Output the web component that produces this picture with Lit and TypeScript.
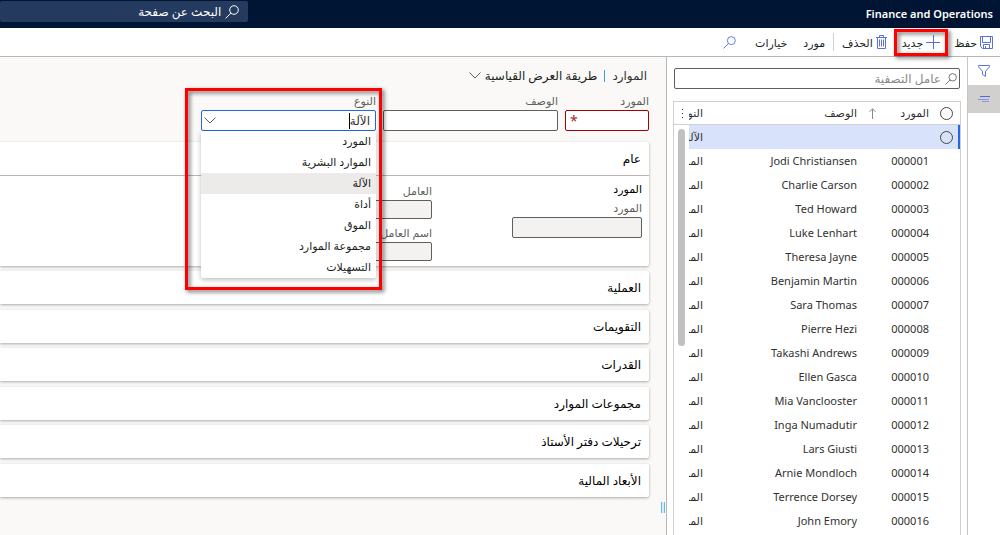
import { LitElement, html, css, svg } from "lit";
import { customElement, state } from "lit/decorators.js";
import { classMap } from "lit/directives/class-map.js";

interface Resource {
  id: string;
  name: string;
}

const NAMES = [
  "Jodi Christiansen",
  "Charlie Carson",
  "Ted Howard",
  "Luke Lenhart",
  "Theresa Jayne",
  "Benjamin Martin",
  "Sara Thomas",
  "Pierre Hezi",
  "Takashi Andrews",
  "Ellen Gasca",
  "Mia Vanclooster",
  "Inga Numadutir",
  "Lars Giusti",
  "Arnie Mondloch",
  "Terrence Dorsey",
  "John Emory",
];

const RESOURCES: Resource[] = NAMES.map((name, i) => ({
  id: String(i + 1).padStart(6, "0"),
  name,
}));

const TYPES = ["المورد", "الموارد البشرية", "الآلة", "أداة", "الموق", "مجموعة الموارد", "التسهيلات"];

const SECTIONS = [
  "العملية",
  "التقويمات",
  "القدرات",
  "مجموعات الموارد",
  "ترحيلات دفتر الأستاذ",
  "الأبعاد المالية",
];

const searchIcon = (size: number) => html`<svg class="icon" width=${size} height=${size} viewBox="0 0 14 14" aria-hidden="true">
  ${svg`<circle cx="9" cy="5" r="4.3" fill="none" stroke="currentColor"/><path d="M5.9 8.1 0.6 13.4" fill="none" stroke="currentColor"/>`}
</svg>`;

const chevronIcon = html`<svg class="icon" width="12" height="7" viewBox="0 0 12 7" aria-hidden="true">
  <path d="M0.5 0.5 6 6 11.5 0.5" fill="none" stroke="currentColor" />
</svg>`;

const saveIcon = html`<svg class="icon blue" width="13" height="13" viewBox="0 0 13 13" aria-hidden="true">
  <path d="M0.5 0.5H12.5V12.5H2.5L0.5 10.5ZM2.5 0.5V6.5H10.5V0.5M3.5 12.5V8.5H9.5V12.5M5.5 10V12.5" fill="none" stroke="currentColor" />
</svg>`;

const plusIcon = html`<svg class="icon blue" width="14" height="14" viewBox="0 0 14 14" aria-hidden="true">
  <path d="M7.5 0V14M0 7.5H14" fill="none" stroke="currentColor" />
</svg>`;

const trashIcon = html`<svg class="icon blue" width="11" height="14" viewBox="0 0 11 14" aria-hidden="true">
  <path d="M0 2.5H11M3.5 2.5V0.5H7.5V2.5M1.5 2.5V13.5H9.5V2.5M3.5 4.5V11.5M5.5 4.5V11.5M7.5 4.5V11.5" fill="none" stroke="currentColor" />
</svg>`;

const funnelIcon = html`<svg class="icon blue" width="12" height="12" viewBox="0 0 12 12" aria-hidden="true">
  <path d="M0.5 0.5H11.5V1.8L7.5 6.2V11.3L4.5 9.5V6.2L0.5 1.8Z" fill="none" stroke="currentColor" />
</svg>`;

const linesIcon = html`<svg class="icon" width="12" height="8" viewBox="0 0 12 8" aria-hidden="true">
  <path d="M2 1.5H12" stroke="#4a6fdc" />
  <path d="M0 4.5H11M4 6.5H11" stroke="#8d93dc" />
</svg>`;

const sortIcon = html`<svg class="icon" width="7" height="11" viewBox="0 0 7 11" aria-hidden="true">
  <path d="M3.5 11V0.8M0.5 3.8 3.5 0.8 6.5 3.8" fill="none" stroke="#8a8886" />
</svg>`;

@customElement("app-root")
export class AppRoot extends LitElement {
  @state() private selectedType = "الآلة";

  static styles = css`
    :host {
      display: block;
      font: 12px/16px "Noto Sans", "DejaVu Sans", sans-serif;
      color: #323130;
    }
    * {
      box-sizing: border-box;
    }
    button,
    input {
      font: inherit;
      color: inherit;
      margin: 0;
      padding: 0;
      border: 0;
      border-radius: 0;
      background: none;
      min-width: 0;
    }
    .icon {
      display: block;
      flex: none;
    }
    .blue {
      color: #5a70dc;
    }
    .page {
      min-height: 100vh;
      display: flex;
      flex-direction: column;
      overflow: hidden;
      background: #fff;
    }
    .topbar {
      display: flex;
      justify-content: space-between;
      align-items: center;
      height: 28px;
      padding: 0 7px 0 0;
      background: #001433;
      color: #fff;
    }
    .brand {
      margin: 0;
      font-size: 11px;
      font-weight: 600;
    }
    .page-search {
      align-self: flex-start;
      display: flex;
      align-items: center;
      gap: 4px;
      width: 25%;
      height: 21px;
      margin-top: 1px;
      padding: 0 9px;
      border-radius: 2px;
      background: #243a5e;
    }
    .page-search input,
    .filter input {
      flex: 1;
    }
    .page-search input::placeholder {
      color: #fff;
      opacity: 1;
    }
    .toolbar {
      display: flex;
      align-items: center;
      height: 29px;
      padding: 0 7px;
      border-bottom: 1px solid #b8b5b2;
      font-size: 11px;
    }
    .command {
      display: flex;
      align-items: center;
      gap: 3px;
      color: #201f1e;
      white-space: nowrap;
    }
    .command-label {
      padding-top: 2px;
    }
    .new {
      position: relative;
      height: 27px;
      margin: 0 6px 0 7px;
      padding: 0 8px;
    }
    .marker {
      position: absolute;
      inset: 0;
      border: 3px solid #f00;
      filter: drop-shadow(2px 2px 2px rgba(0, 0, 0, 0.6));
      pointer-events: none;
    }
    .separator {
      width: 1px;
      height: 18px;
      margin: 0 8px;
      background: #d2d0ce;
    }
    .menus {
      display: flex;
      gap: 16px;
    }
    .find {
      margin-right: 19px;
    }
    .body {
      flex: 1;
      display: flex;
    }
    .rail {
      width: 33px;
      border-left: 1px solid #c8c6c4;
    }
    .rail-button {
      display: flex;
      align-items: center;
      justify-content: center;
      width: 100%;
      height: 28px;
    }
    .rail-button.active {
      background: #d2d0ce;
    }
    .list {
      display: flex;
      flex-direction: column;
      gap: 12px;
      width: 301px;
      padding: 11px 6px 0;
      border-left: 1px solid #b8b5b2;
    }
    .filter {
      display: flex;
      align-items: center;
      gap: 4px;
      height: 21px;
      padding: 0 2px;
      border: 1px solid #605e5c;
      border-radius: 2px;
      margin: 0 1px;
    }
    .filter input::placeholder {
      color: #8a8886;
      opacity: 1;
    }
    .filter .icon {
      color: #605e5c;
    }
    .grid-frame {
      flex: 1;
      border: 1px solid #d2d0ce;
      border-bottom: 0;
      font-size: 11px;
    }
    .grid {
      width: 100%;
      table-layout: fixed;
      border-collapse: separate;
      border-spacing: 0;
    }
    .grid th {
      height: 23px;
      padding: 0;
      border-bottom: 1px solid #d2d0ce;
      font-weight: 400;
      text-align: right;
    }
    .grid td {
      height: 24px;
      padding: 0;
      text-align: right;
      white-space: nowrap;
      overflow: hidden;
    }
    .selected td {
      background: #d8e3fb;
    }
    .selected td:first-child {
      box-shadow: inset -2px 0 #2266e3;
    }
    .selected .gutter {
      background: none;
      vertical-align: top;
    }
    .col-select {
      width: 31px;
    }
    .col-id {
      width: 72px;
    }
    .col-type {
      width: 14px;
    }
    .col-gutter {
      width: 15px;
    }
    .clip {
      overflow: hidden;
      white-space: nowrap;
    }
    .sorted {
      display: flex;
      align-items: center;
      justify-content: space-between;
      padding-left: 12px;
    }
    .pick {
      display: block;
      appearance: none;
      width: 13px;
      height: 13px;
      margin-right: 7px;
      border: 1px solid #484644;
      border-radius: 50%;
    }
    .more {
      display: flex;
      flex-direction: column;
      gap: 3px;
      margin: 0 6px;
    }
    .dot {
      width: 1px;
      height: 1px;
      background: #323130;
    }
    .thumb {
      width: 7px;
      height: 217px;
      margin: 4px 4px 0;
      border-radius: 4px;
      background: #c1c1c1;
    }
    .splitter {
      display: flex;
      align-items: flex-end;
      justify-content: flex-start;
      width: 17px;
      padding: 0 1px 22px;
      background: #faf9f8;
    }
    .grip {
      width: 4px;
      height: 11px;
      border: solid #69b7ef;
      border-width: 0 1px;
      background: #d9ebf8;
    }
    .detail {
      flex: 1;
      min-width: 0;
      background: #faf9f8;
    }
    .title {
      display: flex;
      align-items: center;
      gap: 7px;
      height: 37px;
      padding: 0 2px 0 0;
    }
    .bar {
      width: 1px;
      height: 12px;
      background: #3b9be8;
    }
    .view {
      display: flex;
      align-items: center;
      gap: 4px;
      color: #201f1e;
    }
    .view .icon {
      color: #605e5c;
    }
    .fields {
      display: flex;
      gap: 7px;
      margin-bottom: 11px;
    }
    .field {
      position: relative;
      display: flex;
      flex-direction: column;
      width: 175px;
    }
    .field.short {
      width: 84px;
    }
    label {
      display: block;
      height: 16px;
      font-size: 11px;
      line-height: 14px;
      color: #605e5c;
      white-space: nowrap;
    }
    .box {
      display: flex;
      align-items: center;
      width: 100%;
      height: 21px;
      padding: 0 4px;
      border: 1px solid #605e5c;
      border-radius: 2px;
      background: #fff;
    }
    .box.required {
      border-color: #a80000;
    }
    .box input {
      flex: 1;
    }
    .star {
      color: #a4262c;
      font-size: 14px;
      line-height: 16px;
    }
    .box.combo {
      padding: 0 5px 0 2px;
      border-color: #2266e3;
    }
    .box.combo input {
      flex: none;
      field-sizing: content;
    }
    .caret {
      width: 1px;
      height: 16px;
      background: #000;
    }
    .drop {
      margin-right: auto;
      color: #605e5c;
    }
    .options {
      position: absolute;
      top: 37px;
      inset-inline: 0;
      z-index: 2;
      margin: 0;
      padding: 0;
      list-style: none;
      background: #fff;
      border-radius: 0 0 2px 2px;
      box-shadow: 0 2px 5px rgba(0, 0, 0, 0.25);
    }
    .option {
      height: 21px;
      padding: 0 5px;
      font-size: 11px;
      line-height: 20px;
      color: #201f1e;
      cursor: pointer;
    }
    .option.current {
      background: #edebe9;
    }
    .type-marker {
      inset: -6px -6px auto -16px;
      height: 202px;
      z-index: 3;
    }
    .cards {
      display: flex;
      flex-direction: column;
      gap: 5px;
    }
    .card {
      border-radius: 0 2px 2px 0;
      background: #fff;
      box-shadow: 0 1px 3px rgba(0, 0, 0, 0.32);
    }
    .card:nth-child(even) {
      margin-bottom: 1px;
    }
    .card-head {
      display: flex;
      align-items: center;
      width: 100%;
      height: 33px;
      padding: 0 8px;
      font-weight: 500;
      color: #000;
    }
    .card-body {
      display: flex;
      gap: 80px;
      height: 91px;
      padding: 5px 7px;
      border-top: 1px solid #b8b5b2;
    }
    .group {
      width: 130px;
    }
    .group-title {
      margin: 0 0 4px;
      font-size: 11px;
      font-weight: 500;
      line-height: 16px;
      color: #000;
    }
    .group.tight {
      display: flex;
      flex-direction: column;
      gap: 7px;
      padding-top: 3px;
    }
    .group .box {
      background: #f3f2f1;
    }
    .tight .box {
      height: 19px;
    }
  `;

  private section(title: string) {
    return html`<section class="card"><button class="card-head">${title}</button></section>`;
  }

  render() {
    return html`
      <div class="page" dir="rtl" lang="ar">
        <header class="topbar">
          <h1 class="brand">Finance and Operations</h1>
          <div class="page-search">
            ${searchIcon(14)}
            <input type="search" aria-label="البحث عن صفحة" placeholder="البحث عن صفحة" />
          </div>
        </header>

        <nav class="toolbar">
          <button class="command">${saveIcon}<span class="command-label">حفظ</span></button>
          <button class="command new">${plusIcon}<span class="command-label">جديد</span><span class="marker"></span></button>
          <button class="command">${trashIcon}<span class="command-label">الحذف</span></button>
          <span class="separator"></span>
          <div class="menus">
            <button class="command"><span class="command-label">مورد</span></button>
            <button class="command"><span class="command-label">خيارات</span></button>
          </div>
          <button class="find blue" aria-label="بحث">${searchIcon(13)}</button>
        </nav>

        <div class="body">
          <nav class="rail">
            <button class="rail-button" aria-label="تصفية">${funnelIcon}</button>
            <button class="rail-button active" aria-label="قائمة">${linesIcon}</button>
          </nav>

          <aside class="list">
            <div class="filter">
              ${searchIcon(12)}
              <input type="search" aria-label="عامل التصفية" placeholder="عامل التصفية" />
            </div>
            <div class="grid-frame">
              <table class="grid">
                <colgroup>
                  <col class="col-select" />
                  <col class="col-id" />
                  <col />
                  <col class="col-type" />
                  <col class="col-gutter" />
                </colgroup>
                <thead>
                  <tr>
                    <th><input class="pick" type="checkbox" aria-label="الكل" /></th>
                    <th><div class="sorted"><span>المورد</span>${sortIcon}</div></th>
                    <th>الوصف</th>
                    <th><div class="clip">النوع</div></th>
                    <th>
                      <button class="more" aria-label="المزيد">
                        <span class="dot"></span><span class="dot"></span><span class="dot"></span>
                      </button>
                    </th>
                  </tr>
                </thead>
                <tbody>
                  <tr class="selected">
                    <td><input class="pick" type="checkbox" aria-label="سجل جديد" /></td>
                    <td></td>
                    <td></td>
                    <td>الآلة</td>
                    <td class="gutter" rowspan=${RESOURCES.length + 1}><div class="thumb"></div></td>
                  </tr>
                  ${RESOURCES.map(
                    (r) => html`<tr>
                      <td></td>
                      <td>${r.id}</td>
                      <td>${r.name}</td>
                      <td>المورد</td>
                    </tr>`
                  )}
                </tbody>
              </table>
            </div>
          </aside>

          <div class="splitter" role="separator"><span class="grip"></span></div>

          <main class="detail">
            <div class="title">
              <span>الموارد</span>
              <span class="bar"></span>
              <button class="view">طريقة العرض القياسية ${chevronIcon}</button>
            </div>

            <div class="fields">
              <div class="field short">
                <label for="resource">المورد</label>
                <div class="box required"><input id="resource" required /><span class="star">*</span></div>
              </div>
              <div class="field">
                <label for="description">الوصف</label>
                <input class="box" id="description" />
              </div>
              <div class="field">
                <label for="type">النوع</label>
                <div class="box combo">
                  <input id="type" role="combobox" aria-expanded="true" aria-controls="types" .value=${this.selectedType} />
                  <span class="caret"></span>
                  <button class="drop" aria-label="فتح">${chevronIcon}</button>
                </div>
                <ul class="options" id="types" role="listbox">
                  ${TYPES.map(
                    (t) => html`<li
                      class=${classMap({ option: true, current: t === this.selectedType })}
                      role="option"
                      aria-selected=${t === this.selectedType}
                      @click=${() => (this.selectedType = t)}
                    >
                      ${t}
                    </li>`
                  )}
                </ul>
                <span class="marker type-marker"></span>
              </div>
            </div>

            <div class="cards">
              <section class="card">
                <button class="card-head">عام</button>
                <div class="card-body">
                  <div class="group">
                    <h2 class="group-title">المورد</h2>
                    <label for="general-resource">المورد</label>
                    <input class="box" id="general-resource" readonly />
                  </div>
                  <div class="group tight">
                    <div>
                      <label for="worker">العامل</label>
                      <input class="box" id="worker" readonly />
                    </div>
                    <div>
                      <label for="worker-name">اسم العامل</label>
                      <input class="box" id="worker-name" readonly />
                    </div>
                  </div>
                </div>
              </section>
              ${SECTIONS.map((s) => this.section(s))}
            </div>
          </main>
        </div>
      </div>
    `;
  }
}
